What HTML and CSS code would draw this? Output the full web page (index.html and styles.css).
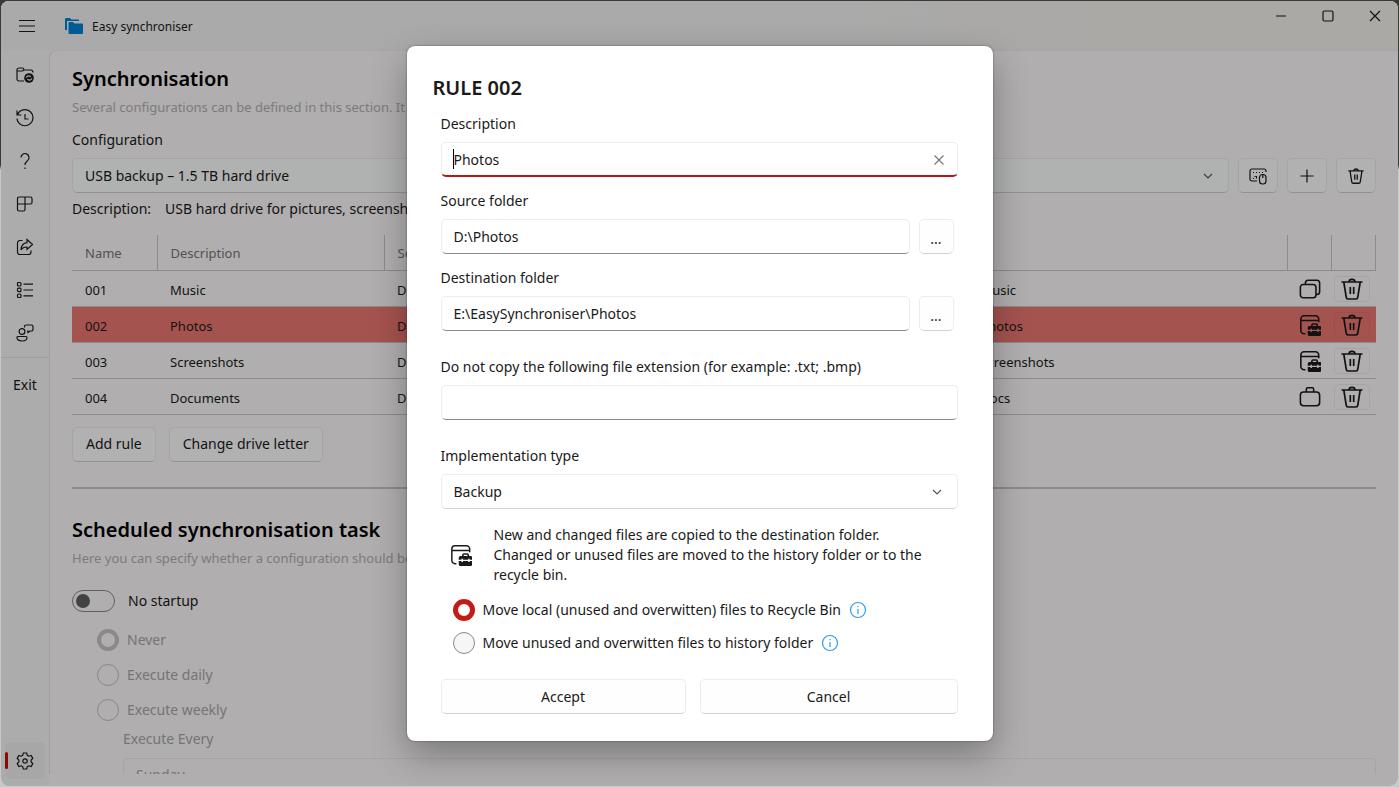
FILE: index.html
```html
<!DOCTYPE html>
<html lang="en">

<head>
    <meta charset="UTF-8">
    <meta name="viewport" content="width=device-width, initial-scale=1.0">
    <title>Easy synchroniser</title>
    <link rel="stylesheet" href="styles.css">
</head>

<body>

    <!-- shared icons -->
    <svg class="sprite" aria-hidden="true">
        <symbol id="i-trash" viewBox="1 1 22 22">
            <path d="M1.500 5h21M9 5a3 2.600 0 0 1 6 0M3.800 5l2.400 15.200a2 2 0 0 0 2 1.800h7.600a2 2 0 0 0 2-1.800l2.400-15.200M10.300 10v7M13.700 10v7" />
        </symbol>
        <symbol id="i-backup" viewBox="0 0 24 24">
            <path d="M7 21.500H5.500a3.500 3.500 0 0 1-3.500-3.500V5.500A3.500 3.500 0 0 1 5.500 2h12.500A3.500 3.500 0 0 1 21.500 5.500V9M2 7h19.500" />
            <path class="solid" d="M9.500 15a2 2 0 0 1 2-2h1.700v-1a2 2 0 0 1 2-2h3.600a2 2 0 0 1 2 2v1h1.700a2 2 0 0 1 2 2v2.300h-3v-1.200h-1.600v1.200h-5.800v-1.200h-1.600v1.200h-3zM15 13h4v-1.200h-4zM9.500 18.500h3v1.200h1.600v-1.200h5.800v1.200h1.600v-1.200h3V22a2 2 0 0 1-2 2h-11a2 2 0 0 1-2-2z" />
        </symbol>
        <symbol id="i-copy" viewBox="0 0 24 24">
            <rect x="1.500" y="7" width="17" height="14.500" rx="3" />
            <path d="M7 7V5.500A3 3 0 0 1 10 2.500h9.500a3 3 0 0 1 3 3v9.500a3 3 0 0 1-3 3h-1" />
        </symbol>
        <symbol id="i-case" viewBox="0 0 24 24">
            <rect x="1.500" y="6.500" width="21" height="15" rx="3.500" />
            <path d="M8 6.500V3.500a1.500 1.500 0 0 1 1.500-1.500h5A1.500 1.500 0 0 1 16 3.500v3" />
        </symbol>
        <symbol id="i-chevron" viewBox="0 0 12 12">
            <path d="M2 4l4 4 4-4" />
        </symbol>
        <symbol id="i-info" viewBox="0 0 18 18">
            <circle cx="9" cy="9" r="7.500" />
            <path d="M9 8v5M9 5v1.300" />
        </symbol>
    </svg>

    <div class="window">

        <header class="titlebar">
            <button type="button" class="menu-btn" aria-label="Menu">
                <svg class="icon" viewBox="0 0 18 18"><path d="M1 3.500h16M1 9h16M1 14.500h16" /></svg>
            </button>
            <svg class="app-logo" viewBox="0 0 18 16" aria-hidden="true">
                <path d="M0 12V1a1 1 0 0 1 1-1h4l1.500 1.500H14V3H2v9z" />
                <path d="M3.500 5a1 1 0 0 1 1-1H8l1.500 1.500H17a1 1 0 0 1 1 1V15a1 1 0 0 1-1 1H4.500a1 1 0 0 1-1-1z" />
            </svg>
            <span class="app-name">Easy synchroniser</span>
            <div class="window-btns">
                <button type="button" aria-label="Minimise">
                    <svg class="icon" viewBox="0 0 12 12"><path d="M1 6h10" /></svg>
                </button>
                <button type="button" aria-label="Maximise">
                    <svg class="icon" viewBox="0 0 12 12"><rect x="1" y="1" width="10" height="10" rx="1.500" /></svg>
                </button>
                <button type="button" aria-label="Close">
                    <svg class="icon" viewBox="0 0 12 12"><path d="M1 1l10 10M11 1L1 11" /></svg>
                </button>
            </div>
        </header>

        <div class="content">

            <nav class="sidebar">
                <a href="#" aria-label="Synchronise">
                    <svg class="icon" viewBox="0 0 18 18">
                        <path d="M8 15H3a2 2 0 0 1-2-2V4a2 2 0 0 1 2-2h3.200a1.500 1.500 0 0 1 1.300.8L8 4h6.500A2.500 2.500 0 0 1 17 6.500M1.500 5h5L8 4" />
                        <circle class="solid" cx="13" cy="12" r="4.800" />
                        <path class="cut" d="M10.200 11.600c.8-2 3-2.300 4.500-.8M15.800 12.400c-.8 2-3 2.300-4.500.8" />
                    </svg>
                </a>
                <a href="#" aria-label="History">
                    <svg class="icon" viewBox="0 0 18 18"><path d="M1 1.500v4.500h4.500M1.500 5.800A8 8 0 1 1 1 9.500M9 5v5h3.500" /></svg>
                </a>
                <a href="#" aria-label="Help">
                    <svg class="icon" viewBox="0 0 18 18"><path d="M5 5.500a4 4 0 1 1 6.800 2.900C10.300 9.800 9 10.500 9 13M9 15.500v1.500" /></svg>
                </a>
                <a href="#" aria-label="Apps">
                    <svg class="icon" viewBox="0 0 18 18"><path d="M3 2h11.500a1.500 1.500 0 0 1 1.500 1.500v4a1.500 1.500 0 0 1-1.500 1.500H1.500M9 2v12.500a1.500 1.500 0 0 1-1.500 1.500h-4.500a1.500 1.500 0 0 1-1.500-1.500V3.500a1.500 1.500 0 0 1 1.500-1.500" /></svg>
                </a>
                <a href="#" aria-label="Share">
                    <svg class="icon" viewBox="0 0 18 18"><path d="M6.500 2.500H4A2.500 2.500 0 0 0 1.500 5v9A2.500 2.500 0 0 0 4 16.500h8.500A2.500 2.500 0 0 0 15 14v-1.500M11 1.500l5.500 5L11 11.500V9c-3 0-4.500.5-6 3 .3-4 2.500-7 6-7.300z" /></svg>
                </a>
                <a href="#" aria-label="Log">
                    <svg class="icon" viewBox="0 0 18 18">
                        <rect x="1.500" y="1.500" width="3.500" height="3.500" rx="1" /><rect x="1.500" y="7.200" width="3.500" height="3.500" rx="1" /><rect x="1.500" y="13" width="3.500" height="3.500" rx="1" />
                        <path d="M7.500 3.200H17M7.500 9H17M7.500 14.800H17" />
                    </svg>
                </a>
                <a href="#" aria-label="Feedback">
                    <svg class="icon" viewBox="0 0 18 18">
                        <circle cx="6" cy="7.500" r="2.900" />
                        <path d="M2 12.500h8a1 1 0 0 1 1 1c0 2.300-2 3.500-5 3.500s-5-1.200-5-3.500a1 1 0 0 1 1-1zM8.500 3.500V2.500a1.500 1.500 0 0 1 1.500-1.500h5.500A1.500 1.500 0 0 1 17 2.500v3A1.500 1.500 0 0 1 15.500 7H14l-2 1.500V7h-1" />
                    </svg>
                </a>
                <a href="#" class="exit">Exit</a>
                <a href="#" class="settings active" aria-label="Settings">
                    <svg class="icon" viewBox="0 0 18 18">
                        <path d="M7.300 1h3.400l.6 2.300 1.500.9 2.300-.7 1.700 3-1.700 1.600v1.800l1.700 1.600-1.700 3-2.300-.7-1.500.9-.6 2.300H7.300l-.6-2.300-1.500-.9-2.300.7-1.700-3 1.700-1.600V8.100L1.200 6.500l1.700-3 2.300.7 1.500-.9z" />
                        <circle cx="9" cy="9" r="2.200" />
                    </svg>
                </a>
            </nav>

            <main class="page">
                <h1>Synchronisation</h1>
                <p class="hint">Several configurations can be defined in this section. It is possible to add rules to each of them.</p>

                <label class="config-label" for="config">Configuration</label>
                <div class="config-row">
                    <div class="select-box">
                        <select id="config" class="tinted">
                            <option>USB backup – 1.5 TB hard drive</option>
                        </select>
                        <svg class="icon chevron"><use href="#i-chevron" /></svg>
                    </div>
                    <button type="button" class="btn square" aria-label="Rename">
                        <svg class="icon" viewBox="0 0 18 18">
                            <path d="M8 14H3a2 2 0 0 1-2-2V4a2 2 0 0 1 2-2h12a2 2 0 0 1 2 2v1M4 5.500h1M7 5.500h1M10 5.500h1M13 5.500h1M4 11.500h1M6 9v1M7.500 11.500V9" />
                            <rect x="10.500" y="7.500" width="6.500" height="9.500" rx="3" />
                            <path d="M13.800 7.500v3.500" />
                        </svg>
                    </button>
                    <button type="button" class="btn square" aria-label="Add">
                        <svg class="icon" viewBox="0 0 18 18"><path d="M9 2.500v13M2.500 9h13" /></svg>
                    </button>
                    <button type="button" class="btn square" aria-label="Delete">
                        <svg class="icon small-trash"><use href="#i-trash" /></svg>
                    </button>
                </div>
                <p class="config-text"><span>Description:</span><span>USB hard drive for pictures, screenshots and music</span></p>

                <table class="rules">
                    <colgroup>
                        <col class="col-name">
                        <col class="col-desc">
                        <col class="col-source">
                        <col>
                        <col class="col-icon">
                        <col class="col-icon">
                    </colgroup>
                    <thead>
                        <tr>
                            <th>Name</th>
                            <th>Description</th>
                            <th>Source folder</th>
                            <th>Destination folder</th>
                            <th></th>
                            <th></th>
                        </tr>
                    </thead>
                    <tbody>
                        <tr>
                            <td>001</td>
                            <td>Music</td>
                            <td>D:\Music</td>
                            <td>E:\EasySynchroniser\Music</td>
                            <td><svg class="icon"><use href="#i-copy" /></svg></td>
                            <td><button type="button" class="row-btn" aria-label="Delete rule 001"><svg class="icon"><use href="#i-trash" /></svg></button></td>
                        </tr>
                        <tr class="selected">
                            <td>002</td>
                            <td>Photos</td>
                            <td>D:\Photos</td>
                            <td>E:\EasySynchroniser\Photos</td>
                            <td><svg class="icon"><use href="#i-backup" /></svg></td>
                            <td><button type="button" class="row-btn" aria-label="Delete rule 002"><svg class="icon"><use href="#i-trash" /></svg></button></td>
                        </tr>
                        <tr>
                            <td>003</td>
                            <td>Screenshots</td>
                            <td>D:\Screenshots</td>
                            <td>E:\EasySynchroniser\Screenshots</td>
                            <td><svg class="icon"><use href="#i-backup" /></svg></td>
                            <td><button type="button" class="row-btn" aria-label="Delete rule 003"><svg class="icon"><use href="#i-trash" /></svg></button></td>
                        </tr>
                        <tr>
                            <td>004</td>
                            <td>Documents</td>
                            <td>D:\Docs</td>
                            <td>E:\EasySynchroniser\Docs</td>
                            <td><svg class="icon"><use href="#i-case" /></svg></td>
                            <td><button type="button" class="row-btn" aria-label="Delete rule 004"><svg class="icon"><use href="#i-trash" /></svg></button></td>
                        </tr>
                    </tbody>
                </table>

                <div class="rule-btns">
                    <button type="button" class="btn">Add rule</button>
                    <button type="button" class="btn">Change drive letter</button>
                </div>

                <hr>

                <h1>Scheduled synchronisation task</h1>
                <p class="hint">Here you can specify whether a configuration should be executed automatically.</p>

                <label class="startup"><input type="checkbox" class="toggle" role="switch">No startup</label>

                <div class="schedule">
                    <label><input type="radio" name="schedule" checked disabled>Never</label>
                    <label><input type="radio" name="schedule" disabled>Execute daily</label>
                    <label><input type="radio" name="schedule" disabled>Execute weekly</label>
                </div>
                <div class="weekday">
                    <label for="weekday">Execute Every</label>
                    <select id="weekday" disabled>
                        <option>Sunday</option>
                    </select>
                </div>
            </main>

        </div>

        <div class="backdrop">
            <form class="dialog" role="dialog" aria-labelledby="dialog-title">
                <h2 id="dialog-title">RULE 002</h2>

                <div class="field">
                    <label for="description">Description</label>
                    <div class="text-box focused">
                        <input type="text" id="description" value="Photos">
                        <span class="caret"></span>
                        <button type="button" class="clear-btn" aria-label="Clear">
                            <svg class="icon" viewBox="0 0 12 12"><path d="M1.500 1.500l9 9M10.500 1.500l-9 9" /></svg>
                        </button>
                    </div>
                </div>

                <div class="field">
                    <label for="source">Source folder</label>
                    <div class="folder">
                        <input type="text" id="source" value="D:\Photos">
                        <button type="button" class="btn browse" aria-label="Browse source folder">...</button>
                    </div>
                </div>

                <div class="field wide-gap">
                    <label for="destination">Destination folder</label>
                    <div class="folder">
                        <input type="text" id="destination" value="E:\EasySynchroniser\Photos">
                        <button type="button" class="btn browse" aria-label="Browse destination folder">...</button>
                    </div>
                </div>

                <div class="field wide-gap">
                    <label for="extensions">Do not copy the following file extension (for example: .txt; .bmp)</label>
                    <input type="text" id="extensions">
                </div>

                <div class="field">
                    <label for="type">Implementation type</label>
                    <div class="select-box">
                        <select id="type">
                            <option>Backup</option>
                        </select>
                        <svg class="icon chevron"><use href="#i-chevron" /></svg>
                    </div>
                </div>

                <div class="type-info">
                    <svg class="icon"><use href="#i-backup" /></svg>
                    <p>New and changed files are copied to the destination folder.<br>
                        Changed or unused files are moved to the history folder or to the recycle bin.</p>
                </div>

                <div class="options">
                    <label>
                        <input type="radio" name="unused" checked>Move local (unused and overwitten) files to Recycle Bin
                        <svg class="icon info"><use href="#i-info" /></svg>
                    </label>
                    <label>
                        <input type="radio" name="unused">Move unused and overwitten files to history folder
                        <svg class="icon info"><use href="#i-info" /></svg>
                    </label>
                </div>

                <div class="dialog-btns">
                    <button type="button" class="btn accept">Accept</button>
                    <button type="button" class="btn">Cancel</button>
                </div>
            </form>
        </div>

    </div>

</body>

</html>
```
FILE: styles.css
```css
* {
    margin: 0;
    box-sizing: border-box;
}

body {
    height: 100vh;
    padding: 1px;
    background: linear-gradient(#3a3838 165px, #c8c8c8 170px);
    font-family: "Noto Sans", "Open Sans", sans-serif;
    font-size: 14px;
    line-height: 20px;
    color: #1a1a1a;
}

button,
input,
select {
    font: inherit;
    color: inherit;
}

button {
    padding: 0;
    border: none;
    background: none;
    display: flex;
    align-items: center;
    justify-content: center;
}

a {
    color: inherit;
    text-decoration: none;
}

.sprite {
    display: none;
}

.icon {
    width: 18px;
    height: 18px;
    flex-shrink: 0;
    fill: none;
    stroke: currentColor;
    stroke-width: 1.2;
}

.solid {
    fill: currentColor;
    stroke: none;
}

.window {
    position: relative;
    height: 100%;
    display: flex;
    flex-direction: column;
    border-radius: 8px;
    background-color: #f7f7f7;
    overflow: hidden;
}

/* title bar */

.titlebar {
    height: 49px;
    flex-shrink: 0;
    display: flex;
    align-items: center;
    background: linear-gradient(90deg, #f4f4f4 60%, #f4f2ec 85%);
}

.menu-btn {
    width: 52px;
    height: 40px;
}

.app-logo {
    width: 18px;
    height: 16px;
    margin: 0 9px 0 12px;
    fill: #0081d6;
}

.app-name {
    font-size: 12px;
    padding-top: 2px;
}

.window-btns {
    display: flex;
    align-self: flex-start;
    margin-left: auto;
}

.window-btns button {
    width: 47px;
    height: 30px;
}

.window-btns .icon {
    width: 12px;
    height: 12px;
}

/* sidebar */

.content {
    flex: 1;
    min-height: 0;
    display: flex;
}

.sidebar {
    width: 48px;
    flex-shrink: 0;
    padding: 3px 4px 7px;
    display: flex;
    flex-direction: column;
}

.sidebar a {
    height: 43px;
    display: flex;
    align-items: center;
    justify-content: center;
}

.sidebar .cut {
    stroke: #f7f7f7;
}

.sidebar .exit {
    height: 54px;
    margin: 3px -4px 0;
    border-top: 1px solid #e4e4e4;
}

.sidebar .settings {
    position: relative;
    height: 37px;
    margin-top: auto;
    border-radius: 5px;
}

.sidebar .active {
    background-color: #efefef;
}

.sidebar .active::before {
    content: "";
    position: absolute;
    left: 0;
    width: 3px;
    height: 17px;
    border-radius: 2px;
    background-color: #c4100c;
}

/* page */

.page {
    flex: 1;
    min-width: 0;
    margin-bottom: 12px;
    padding: 14px 22px 0;
    overflow: hidden;
    border-top: 1px solid #ececec;
    border-left: 1px solid #e6e6e6;
    border-top-left-radius: 8px;
    background-color: #fcfafb;
    box-shadow: 0 12px #fcfafb;
}

h1 {
    font-size: 20px;
    line-height: 28px;
    font-weight: 600;
    color: #000;
}

.hint {
    margin-top: 4px;
    font-size: 13px;
    color: #b2b2b2;
    white-space: nowrap;
}

.config-label {
    display: block;
    margin: 13px 0 8px;
}

.config-row {
    display: flex;
    gap: 9px;
}

.select-box {
    position: relative;
    flex: 1;
}

select {
    appearance: none;
    width: 100%;
    height: 35px;
    padding: 0 12px;
    border: 1px solid #ececec;
    border-bottom-color: #d2d2d2;
    border-radius: 5px;
    background-color: #fff;
}

.tinted {
    background-color: #fcfefe;
}

.chevron {
    position: absolute;
    top: 12px;
    right: 15px;
    width: 12px;
    height: 12px;
    color: #555;
    pointer-events: none;
}

.btn {
    height: 35px;
    padding: 0 13px;
    border: 1px solid #ececec;
    border-bottom-color: #d2d2d2;
    border-radius: 5px;
    background-color: #fefefe;
}

.square {
    width: 40px;
    padding: 0;
}

.small-trash {
    width: 16px;
    height: 16px;
    stroke-width: 1.8;
}

.config-text {
    display: flex;
    gap: 14px;
    margin-top: 6px;
    white-space: nowrap;
}

.rules {
    width: 100%;
    margin-top: 16px;
    table-layout: fixed;
    border-collapse: collapse;
    font-size: 13px;
}

.col-name {
    width: 85px;
}

.col-desc {
    width: 227px;
}

.col-source {
    width: 35%;
}

.col-icon {
    width: 44px;
}

.rules th {
    height: 35px;
    padding: 2px 13px 0;
    border-right: 1px solid #c8c8c8;
    border-bottom: 1px solid #c8c8c8;
    text-align: left;
    font-weight: normal;
    color: #777;
}

.rules td {
    height: 36px;
    padding: 3px 13px 0;
    border-bottom: 1px solid #c8c8c8;
}

.rules td:nth-child(n+5) {
    padding: 1px 0 0;
}

.rules td:last-child {
    padding-right: 4px;
}

.rules .icon {
    display: block;
    width: 22px;
    height: 22px;
    margin: 0 auto;
    stroke-width: 1.7;
}

.rules .selected {
    background-color: #ed7872;
}

.row-btn {
    width: 36px;
    height: 26px;
    margin: 0 auto;
    border: 1px solid rgba(0, 0, 0, 0.06);
    border-radius: 5px;
}

.rule-btns {
    display: flex;
    gap: 13px;
    margin-top: 12px;
}

hr {
    margin: 25px 0 27px;
    border: none;
    border-top: 2px solid #c8c8c8;
}

/* radios and toggle */

input[type="radio"] {
    appearance: none;
    width: 22px;
    height: 22px;
    flex-shrink: 0;
    border: 1px solid #8a8a8a;
    border-radius: 50%;
    background-color: #f6f6f6;
}

input[type="radio"]:checked {
    border: 5px solid #c41c14;
    background-color: #fff;
}

input[type="radio"]:disabled {
    border-color: #c4c4c4;
    background-color: transparent;
}

input[type="radio"]:checked:disabled {
    border-width: 4px;
}

.toggle {
    appearance: none;
    width: 43px;
    height: 22px;
    padding: 3px;
    border: 1px solid #8a8a8a;
    border-radius: 11px;
}

.toggle::before {
    content: "";
    display: block;
    width: 14px;
    height: 14px;
    border-radius: 50%;
    background-color: #606060;
}

.startup {
    display: flex;
    align-items: center;
    gap: 13px;
    margin-top: 22px;
}

.schedule {
    display: flex;
    flex-direction: column;
    gap: 13px;
    margin: 17px 0 8px 25px;
    color: #a8a8a8;
}

.schedule label {
    display: flex;
    align-items: center;
    gap: 8px;
}

.weekday {
    margin-left: 51px;
    color: #a8a8a8;
}

.weekday label {
    display: block;
    margin-bottom: 9px;
}

.weekday select {
    opacity: 1;
    background-color: #fcfafb;
}

/* rule dialog */

.backdrop {
    position: absolute;
    inset: 0;
    display: flex;
    align-items: center;
    justify-content: center;
    background-color: rgba(0, 0, 0, 0.3);
}

.dialog {
    width: 586px;
    max-width: 100%;
    padding: 28px 35px 27px 34px;
    border-radius: 8px;
    background-color: #fff;
    box-shadow: 0 0 2px rgba(0, 0, 0, 0.5), 0 14px 36px rgba(0, 0, 0, 0.3);
}

h2 {
    margin: 0 0 12px -8px;
    font-size: 20px;
    line-height: 28px;
    font-weight: 600;
}

.field {
    margin-bottom: 14px;
}

.wide-gap {
    margin-bottom: 26px;
}

.field label {
    display: block;
    margin-bottom: 8px;
}

input[type="text"] {
    width: 100%;
    height: 35px;
    padding: 0 12px;
    border: 1px solid #ececec;
    border-bottom-color: #8a8a8a;
    border-radius: 5px;
    background-color: #fff;
    outline: none;
}

.text-box {
    position: relative;
}

.focused input[type="text"] {
    border-bottom: 2px solid #b81616;
}

.caret {
    position: absolute;
    top: 7px;
    left: 12px;
    width: 1px;
    height: 20px;
    background-color: #000;
}

.clear-btn {
    position: absolute;
    top: 7px;
    right: 8px;
    width: 22px;
    height: 22px;
    color: #777;
}

.clear-btn .icon {
    width: 12px;
    height: 12px;
}

.folder {
    display: flex;
    gap: 9px;
    padding-right: 4px;
}

.browse {
    width: 35px;
    flex-shrink: 0;
    padding: 4px 0 0;
}

.type-info {
    display: flex;
    align-items: center;
    gap: 22px;
    padding: 2px 0 0 9px;
}

.type-info .icon {
    width: 22px;
    height: 22px;
    stroke-width: 1.6;
}

.options {
    display: flex;
    flex-direction: column;
    gap: 11px;
    margin: 14px 0 25px 12px;
}

.options label {
    display: flex;
    align-items: center;
    gap: 8px;
}

.options .info {
    color: #2f9bee;
}

.dialog-btns {
    display: flex;
    gap: 14px;
}

.dialog-btns .btn {
    flex: 18;
}

.dialog-btns .accept {
    flex: 17;
}
```
